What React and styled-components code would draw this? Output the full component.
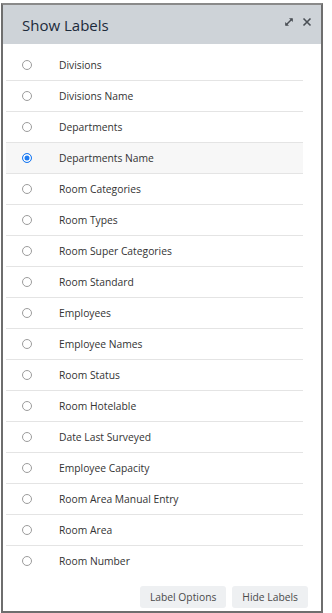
import React, { useState } from 'react';
import styled, { createGlobalStyle } from 'styled-components';

const GlobalStyle = createGlobalStyle`
    html, body {
        margin: 0;
        padding: 0;
        background: #fff;
        font-family: "Open Sans", "Liberation Sans", sans-serif;
    }
`;

const labels = [
    'Divisions',
    'Divisions Name',
    'Departments',
    'Departments Name',
    'Room Categories',
    'Room Types',
    'Room Super Categories',
    'Room Standard',
    'Employees',
    'Employee Names',
    'Room Status',
    'Room Hotelable',
    'Date Last Surveyed',
    'Employee Capacity',
    'Room Area Manual Entry',
    'Room Area',
    'Room Number',
];

const App = () => {
    const [selected, setSelected] = useState('Departments Name');

    return (
        <>
            <GlobalStyle />
            <Panel>
                <Header>
                    <Title>Show Labels</Title>
                    <HeaderIcons>
                        <IconButton aria-label="expand">
                            <svg width="10" height="10" viewBox="0 0 10 10">
                                <path d="M2 8 L8 2" stroke="#4a4f55" strokeWidth="1.4" />
                                <path d="M5 1.2 L8.8 1.2 L8.8 5 Z" fill="#4a4f55" />
                                <path d="M1.2 5 L1.2 8.8 L5 8.8 Z" fill="#4a4f55" />
                            </svg>
                        </IconButton>
                        <IconButton aria-label="close">
                            <svg width="10" height="10" viewBox="0 0 10 10">
                                <path d="M1.5 1.5 L8.5 8.5 M8.5 1.5 L1.5 8.5" stroke="#4a4f55" strokeWidth="1.6" />
                            </svg>
                        </IconButton>
                    </HeaderIcons>
                </Header>

                <List>
                    {labels.map((label) => (
                        <Row
                            key={label}
                            active={selected === label}
                            onClick={() => setSelected(label)}
                        >
                            <Radio checked={selected === label} />
                            <Label>{label}</Label>
                        </Row>
                    ))}
                </List>

                <Footer>
                    <FooterButton>Label Options</FooterButton>
                    <FooterButton>Hide Labels</FooterButton>
                </Footer>
            </Panel>
        </>
    );
};

// Styled Components
const Panel = styled.div`
    box-sizing: border-box;
    width: 322px;
    height: 610px;
    margin: 3px 0 0 1px;
    border: 2px solid #6e6e6e;
    border-top-color: #8a8a8a;
    background: #fff;
    display: flex;
    flex-direction: column;
`;

const Header = styled.div`
    height: 39px;
    background: #ced3d8;
    display: flex;
    align-items: center;
    justify-content: space-between;
    padding: 0 9px 0 19px;
`;

const Title = styled.h2`
    margin: 0;
    font-size: 15px;
    font-weight: 500;
    color: #1c2a3a;
`;

const HeaderIcons = styled.div`
    display: flex;
    align-items: center;
    gap: 7px;
    margin-top: -6px;
`;

const IconButton = styled.span`
    display: flex;
    width: 11px;
    height: 11px;
    align-items: center;
    justify-content: center;
    cursor: pointer;
`;

const List = styled.div`
    padding: 6px 18px 0 3px;
`;

const Row = styled.div`
    height: 30px;
    display: flex;
    align-items: center;
    padding-left: 16px;
    border-bottom: 1px solid #e4e4e4;
    background: ${props => (props.active ? '#f7f7f7' : '#fff')};
    cursor: pointer;

    &:last-child {
        border-bottom: none;
    }
`;

const Radio = styled.span`
    box-sizing: border-box;
    width: 10px;
    height: 10px;
    border-radius: 50%;
    border: 1px solid ${props => (props.checked ? '#1f7cf2' : '#9c9c9c')};
    background: ${props => (props.checked ? '#1f7cf2' : '#fff')};
    box-shadow: ${props => (props.checked ? 'inset 0 0 0 1.5px #fff' : 'none')};
    flex-shrink: 0;
`;

const Label = styled.span`
    margin-left: 27px;
    font-size: 10.3px;
    color: #333;
`;

const Footer = styled.div`
    display: flex;
    justify-content: flex-end;
    gap: 6px;
    padding: 10px 13px 0 0;
`;

const FooterButton = styled.button`
    height: 22px;
    padding: 0 10px;
    border: none;
    border-radius: 3px;
    background: #eef0f2;
    font-family: "Open Sans", "Liberation Sans", sans-serif;
    font-size: 10.3px;
    color: #4a4a4a;
    cursor: pointer;
`;

export default App;
